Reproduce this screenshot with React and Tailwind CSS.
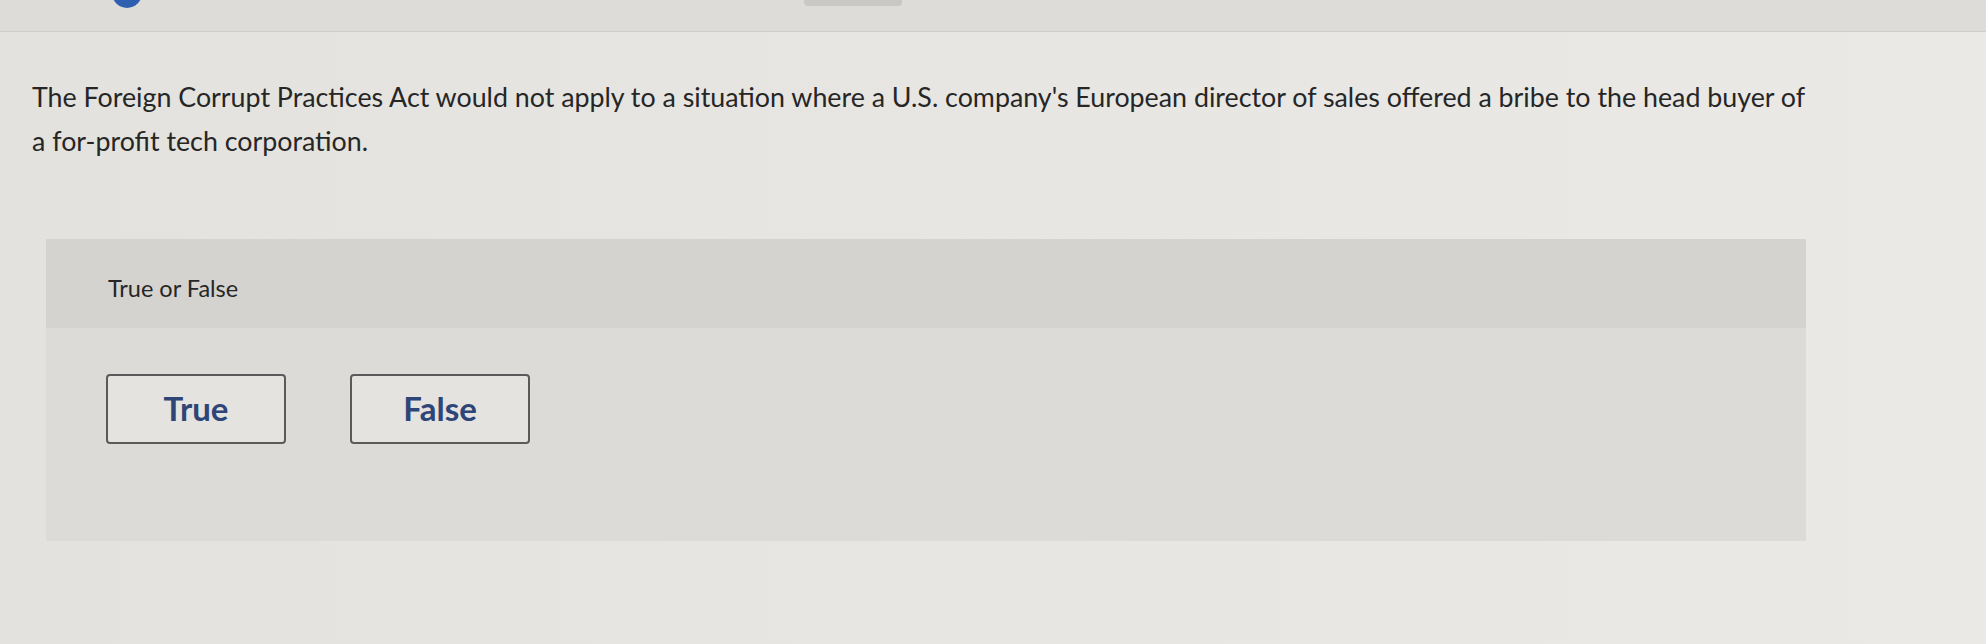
import { useState } from "react";

const question =
  "The Foreign Corrupt Practices Act would not apply to a situation where a U.S. company's European director of sales offered a bribe to the head buyer of a for-profit tech corporation.";

function Choice({ label, active, onClick }) {
  return (
    <button
      type="button"
      onClick={onClick}
      className={`w-[180px] h-[70px] rounded-[4px] border-2 border-[#5a5a5a] bg-[#e4e3df] text-[33px] font-bold text-[#2e4577] ${
        active ? "ring-2 ring-[#2e4577]" : ""
      }`}
    >
      {label}
    </button>
  );
}

export default function App() {
  const [pick, setPick] = useState(null);

  return (
    <div className="w-full h-[644px] overflow-hidden bg-gradient-to-r from-[#e3e2de] via-[#e7e6e2] to-[#eae9e5] font-['Lato','Liberation_Sans',sans-serif] text-[#262626]">
      {/* top bar edge */}
      <div className="relative h-[32px] bg-[#dddcd8] border-b border-[#d0cfcb]">
        <span className="absolute left-[112px] -top-[22px] w-[30px] h-[30px] rounded-full bg-[#2f5fb0]" />
        <span className="absolute left-[804px] -top-[4px] w-[98px] h-[10px] rounded-[4px] bg-[#c9c8c5]" />
      </div>

      {/* question */}
      <p className="pl-[32px] pt-[43px] max-w-[1812px] text-[26.8px] leading-[44px]">
        {question}
      </p>

      {/* answer panel */}
      <div className="mt-[76px] ml-[46px] mr-[180px] bg-[#dcdbd7]">
        <div className="h-[89px] pl-[62px] pt-[35px] bg-[#d4d3cf] text-[23.5px] leading-[28px]">
          True or False
        </div>
        <div className="h-[213px] pl-[60px] pt-[46px] flex gap-[64px] items-start">
          <Choice label="True" active={pick === "t"} onClick={() => setPick("t")} />
          <Choice label="False" active={pick === "f"} onClick={() => setPick("f")} />
        </div>
      </div>
    </div>
  );
}
